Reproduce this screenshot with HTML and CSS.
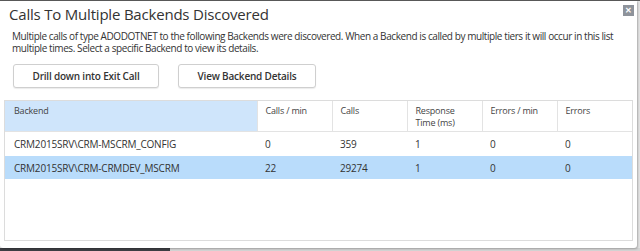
FILE: index.html
```html
<!DOCTYPE html>
<html lang="en">
<head>
  <meta charset="UTF-8" />
  <title>Calls To Multiple Backends Discovered</title>
  <link rel="stylesheet" href="styles.css">
</head>
<body>

  <div class="top-line"></div>

  <div class="dialog">
    <button class="close-btn">&#x2715;</button>
    <h1 class="title">Calls To Multiple Backends Discovered</h1>
    <p class="desc">Multiple calls of type ADODOTNET to the following Backends were discovered. When a Backend is called by multiple tiers it will occur in this list multiple times. Select a specific Backend to view its details.</p>

    <div class="actions">
      <button class="btn btn-drill">Drill down into Exit Call</button>
      <button class="btn btn-view">View Backend Details</button>
    </div>

    <div class="grid">
      <table>
        <colgroup>
          <col class="col-backend">
          <col class="col-num">
          <col class="col-num">
          <col class="col-num">
          <col class="col-num">
          <col class="col-last">
        </colgroup>
        <thead>
          <tr>
            <th class="sorted">Backend</th>
            <th>Calls / min</th>
            <th>Calls</th>
            <th>Response<br>Time (ms)</th>
            <th>Errors / min</th>
            <th>Errors</th>
          </tr>
        </thead>
        <tbody>
          <tr>
            <td>CRM2015SRV\CRM-MSCRM_CONFIG</td>
            <td>0</td>
            <td>359</td>
            <td>1</td>
            <td>0</td>
            <td>0</td>
          </tr>
          <tr class="selected">
            <td>CRM2015SRV\CRM-CRMDEV_MSCRM</td>
            <td>22</td>
            <td>29274</td>
            <td>1</td>
            <td>0</td>
            <td>0</td>
          </tr>
        </tbody>
      </table>
    </div>
  </div>

  <!-- taskbar peeking below the dialog -->
  <div class="bottom-strip">
    <div class="strip-dark"></div>
    <div class="strip-light"></div>
  </div>

</body>
</html>
```

FILE: styles.css
```css
* {
  margin: 0;
  padding: 0;
  box-sizing: border-box;
}

body {
  font-family: 'Open Sans', 'Noto Sans', sans-serif;
  color: #333;
  background-color: #e4e4e4;
  width: 640px;
  height: 251px;
  overflow: hidden;
}

.top-line {
  height: 1px;
  background-color: #5a5a5a;
}

.dialog {
  position: relative;
  width: 637px;
  height: 247px;
  background-color: #fff;
  border-radius: 0 0 3px 3px;
  box-shadow: 1px 1px 2px rgba(0,0,0,0.25);
  padding: 3px 0 0 0;
}

.close-btn {
  position: absolute;
  top: 4px;
  right: 3px;
  width: 11px;
  height: 11px;
  background-color: #8e939b;
  color: #fff;
  border: none;
  font-size: 8px;
  line-height: 11px;
  font-weight: bold;
  text-align: center;
}

.title {
  font-size: 15px;
  letter-spacing: -0.2px;
  font-weight: normal;
  line-height: 20px;
  padding-left: 9px;
  color: #333;
}

.desc {
  font-size: 10px;
  letter-spacing: -0.42px;
  line-height: 12px;
  margin-top: 6px;
  padding: 0 14px 0 12px;
  color: #333;
}

.actions {
  display: flex;
  gap: 19px;
  margin-top: 10px;
  padding-left: 13px;
}

.btn {
  height: 24px;
  background-color: #fff;
  border: 1px solid #cfcfcf;
  border-radius: 3px;
  box-shadow: 0 1px 1px rgba(0,0,0,0.08);
  font-family: 'Open Sans', sans-serif;
  font-size: 10px;
  letter-spacing: -0.2px;
  font-weight: 600;
  color: #333;
}

.btn-drill {
  width: 146px;
}

.btn-view {
  width: 138px;
}

.grid {
  margin: 12px 0 0 4px;
  width: 629px;
  height: 141px;
  border: 1px solid #dcdcdc;
}

table {
  width: 100%;
  border-collapse: collapse;
  table-layout: fixed;
  font-size: 10px;
  letter-spacing: -0.2px;
}

.col-backend {
  width: 252px;
}

.col-num {
  width: 75px;
}

th {
  height: 30px;
  text-align: left;
  vertical-align: top;
  font-weight: normal;
  font-size: 9px;
  line-height: 12px;
  padding: 4px 8px 0 8px;
  border-left: 1px solid #e3e3e3;
  border-bottom: 1px solid #e3e3e3;
  color: #444;
}

th.sorted {
  background-color: #cfe5fb;
  border-left: none;
  padding-left: 9px;
}

td {
  height: 25px;
  padding: 0 8px;
  white-space: nowrap;
  overflow: hidden;
  color: #333;
}

td:first-child {
  padding-left: 9px;
}

tr.selected td {
  height: 23px;
  background-color: #b9dcfb;
}

.bottom-strip {
  display: flex;
  height: 3px;
}

.strip-dark {
  width: 170px;
  background-color: #3e3f44;
}

.strip-light {
  flex: 1;
  background-color: #d5d5d5;
}
```
